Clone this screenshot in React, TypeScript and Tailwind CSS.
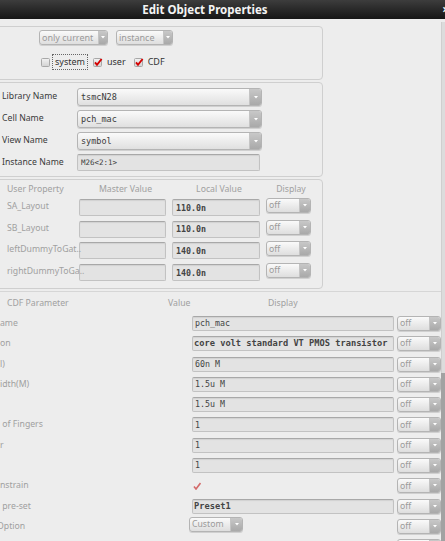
import React from 'react';

const mono = "font-['DejaVu_Sans_Mono','Liberation_Mono',monospace]";

const Arrow = () => (
  <svg width="4" height="3" viewBox="0 0 4 3">
    <path d="M0 0 L4 0 L2 2.5 Z" fill="#ffffff" />
  </svg>
);

const Combo = ({ text, className, textClass = 'text-[#9a9a9a]', btn = 'w-[9px]' }: { text: string; className: string; textClass?: string; btn?: string }) => (
  <div className={`flex shrink-0 overflow-hidden rounded-[3px] border border-[#b4b4b4] bg-gradient-to-b from-[#fafafa] to-[#dedede] shadow-[0_1px_0_rgba(0,0,0,0.12)] ${className}`}>
    <div className={`flex flex-1 items-center overflow-hidden whitespace-nowrap pl-[2px] leading-none ${textClass}`}>{text}</div>
    <div className={`flex items-center justify-center border-l border-[#c4c4c4] bg-gradient-to-b from-[#c8c8c8] to-[#a9a9a9] ${btn}`}>
      <Arrow />
    </div>
  </div>
);

const Field = ({ text, className }: { text?: string; className: string }) => (
  <div className={`flex shrink-0 items-center overflow-hidden whitespace-nowrap rounded-[2px] border border-[#c2c2c2] border-t-[#a8a8a8] bg-[#e3e3e3] shadow-[inset_0_1px_1px_rgba(0,0,0,0.08)] ${mono} text-[#444] ${className}`}>
    {text}
  </div>
);

const Check = ({ checked }: { checked: boolean }) => (
  <svg width="10" height="10" viewBox="0 0 10 10" className="shrink-0">
    <defs>
      <linearGradient id="cb" x1="0" y1="0" x2="0" y2="1">
        <stop offset="0" stopColor="#f2f2f2" />
        <stop offset="1" stopColor="#d2d2d2" />
      </linearGradient>
    </defs>
    <rect x="0.5" y="1.5" width="8" height="8" rx="1" fill="url(#cb)" stroke="#a8a8a8" />
    {checked && <path d="M2 5.3 L4 7.8 L8.6 2" stroke="#d40000" strokeWidth="1.9" fill="none" />}
  </svg>
);

const userProps = [
  { name: 'SA_Layout', value: '110.0n' },
  { name: 'SB_Layout', value: '110.0n' },
  { name: 'leftDummyToGat..', value: '140.0n' },
  { name: 'rightDummyToGa..', value: '140.0n' },
];

type CdfRow = { label: string; kind: 'field' | 'check' | 'combo' | 'none'; value?: string; bold?: boolean; shift?: boolean };

const cdfRows: CdfRow[] = [
  { label: 'ame', kind: 'field', value: 'pch_mac' },
  { label: 'on', kind: 'field', value: 'core volt standard VT PMOS transistor', bold: true },
  { label: 'l)', kind: 'field', value: '60n M' },
  { label: 'idth(M)', kind: 'field', value: '1.5u M' },
  { label: '', kind: 'field', value: '1.5u M' },
  { label: ' of Fingers', kind: 'field', value: '1' },
  { label: 'r', kind: 'field', value: '1' },
  { label: '', kind: 'field', value: '1' },
  { label: 'nstrain', kind: 'check' },
  { label: ' pre-set', kind: 'field', value: 'Preset1', bold: true },
  { label: 'Option', kind: 'combo', shift: true },
  { label: '', kind: 'none' },
];

export default function App() {
  return (
    <div className="flex h-[541px] w-[445px] flex-col overflow-hidden bg-[#ededed] font-['Noto_Sans','Open_Sans',sans-serif]">
      <div className="relative flex h-[19px] shrink-0 items-center justify-center bg-gradient-to-b from-[#3d3d3d] to-[#161616] pr-[35px] text-[11.5px] font-bold text-[#f4f4f4]">
        Edit Object Properties
        <span className="absolute right-[-4px] top-[1px] text-[12px]">×</span>
      </div>

      <div className="flex flex-1">
        <div className="w-[441px] shrink-0 overflow-hidden">
          {/* filter group */}
          <div className="ml-[-4px] mt-[7px] h-[54px] w-[327px] rounded-[4px] border border-[#cfcfcf]">
            <div className="flex gap-[8px] pl-[42px] pt-[3px] text-[9px]">
              <Combo text="only current" className="h-[15px] w-[69px]" />
              <Combo text="instance" className="h-[15px] w-[57px]" />
            </div>
            <div className="mt-[9px] flex items-center pl-[44px] text-[9px] text-[#333]">
              <Check checked={false} />
              <span className="ml-[1px] flex h-[16px] items-center border border-dotted border-[#666] px-[2px]">system</span>
              <span className="ml-[5px]"><Check checked /></span>
              <span className="ml-[4px]">user</span>
              <span className="ml-[8px]"><Check checked /></span>
              <span className="ml-[4px]">CDF</span>
            </div>
          </div>

          {/* name group */}
          <div className="ml-[-4px] mt-[2px] h-[95px] w-[327px] rounded-[4px] border border-[#cfcfcf] pl-[5px] pt-[5px] text-[8.7px] text-[#3a3a3a]">
            {[
              ['Library Name', 'tsmcN28'],
              ['Cell Name', 'pch_mac'],
              ['View Name', 'symbol'],
            ].map(([label, value]) => (
              <div key={label} className="mb-[4px] flex h-[18px] items-center">
                <span className="w-[75px]">{label}</span>
                <Combo
                  text={value}
                  className="h-[18px] w-[185px] border-[#b0b0b0] from-[#e8e8e8] to-[#e0e0e0]"
                  textClass={`${mono} pl-[3px] text-[8.5px] text-[#3a3a3a]`}
                  btn="w-[12px]"
                />
              </div>
            ))}
            <div className="flex h-[17px] items-center">
              <span className="w-[75px]">Instance Name</span>
              <Field text="M26<2:1>" className="h-[17px] w-[183px] pl-[3px] text-[7.5px]" />
            </div>
          </div>

          {/* user property group */}
          <div className="ml-[-4px] mt-[2px] h-[110px] w-[327px] rounded-[4px] border border-[#cfcfcf] text-[8.7px] text-[#a0a0a0]">
            <div className="flex h-[19px] items-center">
              <span className="w-[82px] pl-[10px]">User Property</span>
              <span className="w-[93px] text-center">Master Value</span>
              <span className="w-[94px] text-center">Local Value</span>
              <span className="w-[50px] text-center">Display</span>
            </div>
            <div className="flex flex-col gap-[4.7px]">
              {userProps.map((p) => (
                <div key={p.name} className="flex h-[17px] items-start">
                  <span className="relative z-10 w-[82px] whitespace-nowrap pl-[10px] leading-[15px]">{p.name}</span>
                  <Field className="h-[17px] w-[87px]" />
                  <Field text={p.value} className="ml-[6px] h-[17px] w-[88px] items-end pb-[1px] pl-[3px] text-[8.3px] font-bold" />
                  <Combo text="off" className="ml-[6px] mt-[-1px] h-[15px] w-[45px]" btn="w-[11px]" />
                </div>
              ))}
            </div>
          </div>

          {/* CDF parameters */}
          <div className="ml-[-4px] mt-[2px] w-[460px] rounded-t-[4px] border-l border-t border-[#d6d6d6] text-[8.7px] text-[#a0a0a0]">
            <div className="flex h-[24px] items-center">
              <span className="w-[171px] pl-[10px]">CDF Parameter</span>
              <span className="w-[100px]">Value</span>
              <span>Display</span>
            </div>
            {cdfRows.map((r, i) => (
              <div key={i} className="flex h-[20.3px] items-start">
                <span className="w-[195px] overflow-hidden whitespace-pre pl-[3px] leading-[15px]">
                  <span className={r.shift ? 'ml-[-3px]' : ''}>{r.label}</span>
                </span>
                {r.kind === 'field' && (
                  <Field
                    text={r.value}
                    className={`h-[15px] w-[202px] ${r.bold ? 'pl-[1px] text-[8.7px] font-bold' : 'pl-[2px] text-[8.3px]'}`}
                  />
                )}
                {r.kind === 'check' && (
                  <div className="flex h-[15px] w-[202px] items-center pl-[1px]">
                    <svg width="8" height="8" viewBox="0 0 8 8">
                      <path d="M1 4.5 L3 7 L7.5 1" stroke="#d36a6a" strokeWidth="1.6" fill="none" />
                    </svg>
                  </div>
                )}
                {r.kind === 'combo' && (
                  <div className="w-[202px]">
                    <Combo text="Custom" className="ml-[-3px] mt-[-2px] h-[15px] w-[54px]" btn="w-[12px]" />
                  </div>
                )}
                {r.kind === 'none' && <div className="w-[202px]" />}
                <Combo text="off" className="ml-[3px] h-[15px] w-[44px]" btn="w-[11px]" />
              </div>
            ))}
          </div>
        </div>

        {/* scrollbar */}
        <div className="mt-[3px] flex w-[4px] flex-col">
          <div className="h-[351px] border-l border-[#cfcfcf] bg-[#dcdcdc]" />
          <div className="flex-1 bg-[#a2a2a2]" />
        </div>
      </div>
    </div>
  );
}
